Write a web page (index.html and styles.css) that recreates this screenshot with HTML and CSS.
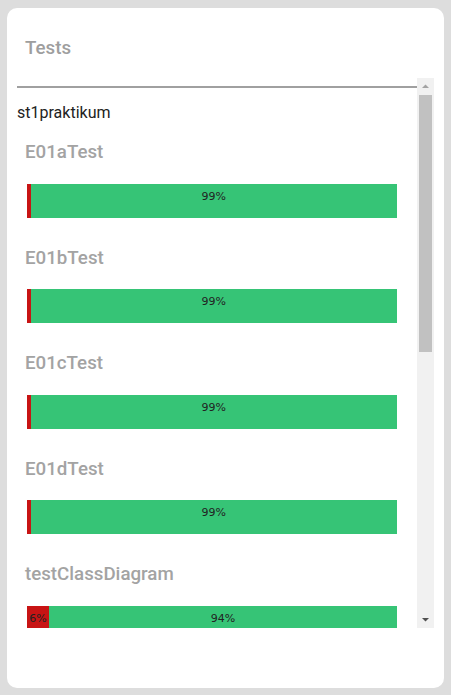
FILE: index.html
```html
<!DOCTYPE html>
<html>
<head>
<meta charset="utf-8">
<link rel="stylesheet" href="styles.css">
</head>
<body>
<div class="card">
  <div class="card-header">Tests</div>
  <div class="scroll">
    <div class="list">
      <hr class="sep">
      <div class="group">st1praktikum</div>
      <div class="test">
        <div class="test-name">E01aTest</div>
        <div class="bar">
          <div class="seg fail" style="width:1%"></div>
          <div class="seg pass" style="width:99%">99%</div>
        </div>
      </div>
      <div class="test">
        <div class="test-name">E01bTest</div>
        <div class="bar">
          <div class="seg fail" style="width:1%"></div>
          <div class="seg pass" style="width:99%">99%</div>
        </div>
      </div>
      <div class="test">
        <div class="test-name">E01cTest</div>
        <div class="bar">
          <div class="seg fail" style="width:1%"></div>
          <div class="seg pass" style="width:99%">99%</div>
        </div>
      </div>
      <div class="test">
        <div class="test-name">E01dTest</div>
        <div class="bar">
          <div class="seg fail" style="width:1%"></div>
          <div class="seg pass" style="width:99%">99%</div>
        </div>
      </div>
      <div class="test">
        <div class="test-name">testClassDiagram</div>
        <div class="bar">
          <div class="seg fail" style="width:6%">6%</div>
          <div class="seg pass" style="width:94%">94%</div>
        </div>
      </div>
    </div>
    <div class="scrollbar">
      <div class="sb-btn">
        <svg width="17" height="17" viewBox="0 0 17 17"><path d="M5 10 L8.5 6.5 L12 10 Z" fill="#a3a3a3"/></svg>
      </div>
      <div class="sb-track"><div class="sb-thumb"></div></div>
      <div class="sb-btn">
        <svg width="17" height="17" viewBox="0 0 17 17"><path d="M5 7 L8.5 10.5 L12 7 Z" fill="#505050"/></svg>
      </div>
    </div>
  </div>
</div>
</body>
</html>
```

FILE: styles.css
```css
html, body {
  margin: 0;
  padding: 0;
}
body {
  background: #dddddd;
  padding: 8px 7px 7px 7px;
  font-family: Roboto, "Liberation Sans", sans-serif;
}
.card {
  background: #ffffff;
  border-radius: 10px;
  padding: 0 10px 60px 10px;
  height: 680px;
  box-sizing: border-box;
}
.card-header {
  height: 70px;
  box-sizing: border-box;
  padding-top: 10px;
  padding-left: 8px;
  display: flex;
  align-items: center;
  font-size: 18.72px;
  font-weight: 500;
  color: #9e9e9e;
}
.scroll {
  height: 550px;
  display: flex;
}
.list {
  flex: 1;
  min-width: 0;
  overflow: hidden;
}
.scrollbar {
  width: 17px;
  flex: none;
  background: #f1f1f1;
  display: flex;
  flex-direction: column;
}
.sb-btn {
  height: 17px;
  flex: none;
}
.sb-btn svg {
  display: block;
}
.sb-track {
  flex: 1;
  padding: 0 2px;
}
.sb-thumb {
  height: 257px;
  background: #c1c1c1;
}
.sep {
  margin: 8px 0 0 0;
  border: 0;
  border-top: 2px solid #a0a0a0;
  height: 0;
}
.group {
  font-size: 16px;
  line-height: 20px;
  color: #222222;
  margin-top: 15px;
}
.test {
  padding: 19px 0 20px 0;
}
.test + .test {
  padding-top: 10px;
}
.test-name {
  font-size: 18.72px;
  line-height: 21.5px;
  font-weight: 500;
  color: #a3a3a3;
  padding-left: 8px;
}
.bar {
  display: flex;
  margin: 20px 0 0 10px;
  width: 370px;
  height: 34px;
}
.seg {
  height: 100%;
  font-family: "DejaVu Sans", sans-serif;
  font-size: 11px;
  line-height: 25px;
  text-align: center;
  color: #222222;
  white-space: nowrap;
  overflow: hidden;
}
.fail {
  background: #c81414;
  flex: none;
}
.pass {
  background: #36c476;
  flex: 1;
}
```
